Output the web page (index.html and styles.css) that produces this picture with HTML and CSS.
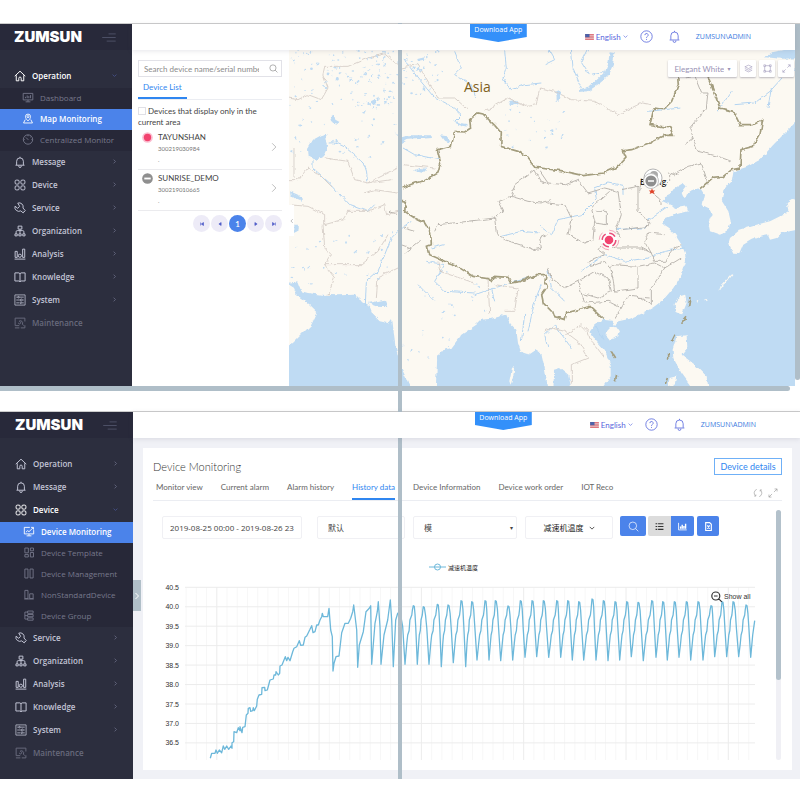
FILE: index.html
```
<!DOCTYPE html>
<html lang="en">
<head>
<meta charset="utf-8">
<meta name="viewport" content="width=device-width, initial-scale=1">
<title>ZUMSUN device monitoring</title>
<link rel="stylesheet" href="styles.css">
</head>
<body>
<svg class="sprite" aria-hidden="true">
  <symbol id="i-home" viewBox="0 0 16 16"><path d="M1 8.2 8 1.6l7 6.6M3 7v7.4h3.4V11a1.6 1.6 0 0 1 3.2 0v3.4H13V7"/></symbol>
  <symbol id="i-board" viewBox="0 0 16 16"><path d="M1 2h14v9.5H1zM8 11.500V14M4.500 14.300h7M4.300 9V7M6.800 9V5M9.200 9V6M11.700 9V4.500"/></symbol>
  <symbol id="i-map" viewBox="0 0 16 16"><path d="M8 11.500C5.500 9 4.300 7.300 4.300 5.300a3.700 3.700 0 0 1 7.400 0c0 2-1.200 3.700-3.700 6.200zM4 9.500 1.500 14.500h13L12 9.500"/><circle cx="8" cy="5.300" r="1.500"/></symbol>
  <symbol id="i-gauge" viewBox="0 0 16 16"><circle cx="8" cy="8" r="6.800"/><path d="M5 5l3.500 3.500M8 1.500v1.800M1.500 8h1.600M13 8h1.600M12.500 3.600l-1.100 1.100"/></symbol>
  <symbol id="i-bell" viewBox="0 0 16 16"><path d="M2 12.300h12M3.500 12V7a4.500 4.500 0 0 1 9 0v5M8 2.500V1M6.300 13v.6a1.700 1.700 0 0 0 3.400 0V13"/></symbol>
  <symbol id="i-grid" viewBox="0 0 16 16"><rect x="1.500" y="1.500" width="5.300" height="5.300" rx="1.500"/><rect x="9.200" y="1.500" width="5.300" height="5.300" rx="1.500"/><rect x="1.500" y="9.200" width="5.300" height="5.300" rx="1.500"/><rect x="9.200" y="9.200" width="5.300" height="5.300" rx="1.500"/></symbol>
  <symbol id="i-wrench" viewBox="0 0 16 16"><path d="M5 1.500A5.300 5.300 0 0 1 12 8l3 3.500-2.800 3L9 11.800A5.300 5.300 0 0 1 1.400 5.600L5 8.500l2.500-2.800zM12 11.800l.6.6"/></symbol>
  <symbol id="i-org" viewBox="0 0 16 16"><path d="M5.500 1.500h5v4h-5zM8 5.500v6M2.800 11.500V9q0-1.500 1.500-1.500h7.400q1.500 0 1.500 1.500v2.500M1.300 11.800h3v2.700h-3zM6.500 11.800h3v2.700h-3zM11.700 11.800h3v2.700h-3z"/></symbol>
  <symbol id="i-bars" viewBox="0 0 16 16"><path d="M.8 14.800h14.400M1.500 12.500v-8h2.800v8zM11.500 12.500v-11h2.800v11z"/><circle cx="7.800" cy="10.300" r="2.100"/></symbol>
  <symbol id="i-book" viewBox="0 0 16 16"><path d="M8 3.500V14M1.200 2.500H6.500L8 3.600 9.500 2.500h5.300v10.800H9.500L8 14.300 6.500 13.300H1.200z"/></symbol>
  <symbol id="i-system" viewBox="0 0 16 16"><g stroke-width="1"><path d="M1.200 1.200h13.600v13.600H1.200zM3 4.200h2M7 4.200h6M3 8h5M11.500 8H13M3 11.800h4M10.500 11.800H13"/><circle cx="6" cy="4.200" r="1"/><circle cx="9.800" cy="8" r="1.300"/><circle cx="9" cy="11.800" r="1"/></g></symbol>
  <symbol id="i-maint" viewBox="0 0 16 16"><path d="M14.500 6V1.500h-13v10H7M1.200 14.500h6M9 14.500h5.500V11"/><path d="M7 5.500a3 3 0 0 1 4.200 4L13 11.500M7 5.500l2.200 2L7.500 9.500 5.500 8"/></symbol>
  <symbol id="i-monitor" viewBox="0 0 16 16"><path d="M14.800 6v5.500H1.200V2h8M8 11.500V14M4.500 14.300h7M3.500 9 6 6.800l2 1.500L14 2.500M11 2h3.500v3.300"/></symbol>
  <symbol id="i-template" viewBox="0 0 16 16"><path d="M2 1.500h5v7H2zM10 1.500h4.500v4H10zM2 11h5v3.500H2zM10 8h4.500v6.500H10z"/></symbol>
  <symbol id="i-columns" viewBox="0 0 16 16"><path d="M2 1.500h4.500v13H2zM9.500 1.500H14v13H9.500z"/></symbol>
  <symbol id="i-nonstd" viewBox="0 0 16 16"><path d="M2 2h4.500v12H2zM9 7h5v7H9zM1 14.500h14"/></symbol>
  <symbol id="i-group" viewBox="0 0 16 16"><path d="M6 1.500h8v3.300H6zM6 6.500h8v3.300H6zM6 11.500h8v3.300H6zM6 3H2v10.200h4M2 8.200h4"/></symbol>
  <symbol id="i-right" viewBox="0 0 8 8"><path d="M2.500 1 5.500 4l-3 3"/></symbol>
  <symbol id="i-down" viewBox="0 0 8 8"><path d="M1 2.500 4 5.500l3-3"/></symbol>
  <symbol id="i-search" viewBox="0 0 16 16"><circle cx="7" cy="7" r="5.500"/><path d="M11 11l4 4"/></symbol>
  <symbol id="i-menu" viewBox="0 0 16 10"><path d="M8 1h8M1 5h15M6 9h10"/></symbol>
  <symbol id="i-help" viewBox="0 0 16 16"><circle cx="8" cy="8" r="7"/><path d="M6 6.300a2 2 0 1 1 3 1.700q-1 .6-1 1.700M8 11v1.200"/></symbol>
  <symbol id="i-layers" viewBox="0 0 16 16"><path d="M8 2 14.500 5 8 8 1.500 5zM1.500 8 8 11l6.500-3M1.500 11 8 14l6.500-3"/></symbol>
  <symbol id="i-frame" viewBox="0 0 16 16"><path d="M1.500 1.500h3v3h-3zM11.500 1.500h3v3h-3zM1.500 11.500h3v3h-3zM11.500 11.500h3v3h-3zM4.500 3h7M4.500 13h7M3 4.500v7M13 4.500v7"/></symbol>
  <symbol id="i-expand" viewBox="0 0 16 16"><path d="M9.500 6.500l5-5M10.500 1.500h4v4M6.500 9.500l-5 5M1.500 10.500v4h4"/></symbol>
  <symbol id="i-refresh" viewBox="0 0 16 16"><path d="M6 2.200A6.200 6.200 0 0 0 4 12.700M2 13h2.500v-2.700M10 13.800A6.200 6.200 0 0 0 12 3.300M14 3h-2.500v2.700"/></symbol>
  <symbol id="i-flag" viewBox="0 0 16 11"><path fill="#e9cfd3" d="M0 0h16v11H0z"/><path fill="none" stroke="#dc6068" stroke-width="1.500" d="M0 1h16M0 4h16M0 7h16M0 10h16"/><path fill="#4d62a8" d="M0 0h8v6H0z"/></symbol>
</svg>

<main class="page">
  <section class="shot shot-map" aria-label="Map monitoring">
    <aside class="side">
      <div class="brand"><span class="logo">ZUMSUN</span><button class="plain menu" aria-label="Collapse menu"><svg><use href="#i-menu"/></svg></button></div>
      <nav>
        <ul>
          <li><a class="on" href="#"><svg><use href="#i-home"/></svg>Operation<svg class="arr"><use href="#i-down"/></svg></a>
            <ul class="sub">
              <li><a href="#"><svg><use href="#i-board"/></svg>Dashboard</a></li>
              <li><a class="current" href="#"><svg><use href="#i-map"/></svg>Map Monitoring</a></li>
              <li><a href="#"><svg><use href="#i-gauge"/></svg>Centralized Monitor</a></li>
            </ul></li>
          <li><a href="#"><svg><use href="#i-bell"/></svg>Message<svg class="arr"><use href="#i-right"/></svg></a></li>
          <li><a href="#"><svg><use href="#i-grid"/></svg>Device<svg class="arr"><use href="#i-right"/></svg></a></li>
          <li><a href="#"><svg><use href="#i-wrench"/></svg>Service<svg class="arr"><use href="#i-right"/></svg></a></li>
          <li><a href="#"><svg><use href="#i-org"/></svg>Organization<svg class="arr"><use href="#i-right"/></svg></a></li>
          <li><a href="#"><svg><use href="#i-bars"/></svg>Analysis<svg class="arr"><use href="#i-right"/></svg></a></li>
          <li><a href="#"><svg><use href="#i-book"/></svg>Knowledge<svg class="arr"><use href="#i-right"/></svg></a></li>
          <li><a href="#"><svg><use href="#i-system"/></svg>System<svg class="arr"><use href="#i-right"/></svg></a></li>
          <li><a class="dim" href="#"><svg><use href="#i-maint"/></svg>Maintenance</a></li>
        </ul>
      </nav>
    </aside>
    <div class="work">
      <header class="top">
        <a class="app" href="#">Download App</a>
        <label class="lang"><svg class="flag"><use href="#i-flag"/></svg><select aria-label="Language"><option>English</option></select><svg class="tiny"><use href="#i-down"/></svg></label>
        <button class="plain" aria-label="Help"><svg class="ico"><use href="#i-help"/></svg></button>
        <button class="plain" aria-label="Alerts"><svg class="ico"><use href="#i-bell"/></svg></button>
        <a class="user" href="#">ZUMSUN\ADMIN</a>
      </header>
      <div class="split">
        <div class="panel">
          <div class="search"><input type="text" aria-label="Search devices" placeholder="Search device name/serial number"><button class="plain" aria-label="Search"><svg><use href="#i-search"/></svg></button></div>
          <div class="ptabs"><a href="#">Device List</a></div>
          <label class="only"><input type="checkbox">Devices that display only in the current area</label>
          <ul class="devices">
            <li><svg class="state" viewBox="0 0 12 12"><circle cx="6" cy="6" r="5.800" fill="#fbc0d2"/><circle cx="6" cy="6" r="4" fill="#f2436f"/></svg><div><b>TAYUNSHAN</b><small>300219030984</small><small>.</small></div><svg class="go"><use href="#i-right"/></svg></li>
            <li><svg class="state" viewBox="0 0 12 12"><circle cx="6" cy="6" r="5.800" fill="#8f8f8f"/><path d="M2.500 6h7" stroke="#fff" stroke-width="2"/></svg><div><b>SUNRISE_DEMO</b><small>300219010665</small><small>.</small></div><svg class="go"><use href="#i-right"/></svg></li>
          </ul>
          <div class="pager">
            <button aria-label="First page"><svg viewBox="0 0 8 8"><path d="M2 2v4M6 2v4L3 4z"/></svg></button>
            <button aria-label="Previous page"><svg viewBox="0 0 8 8"><path d="M5.500 2v4L2.500 4z"/></svg></button>
            <button class="now">1</button>
            <button aria-label="Next page"><svg viewBox="0 0 8 8"><path d="M2.500 2v4l3-2z"/></svg></button>
            <button aria-label="Last page"><svg viewBox="0 0 8 8"><path d="M6 2v4M2 2v4l3-2z"/></svg></button>
          </div>
        </div>
        <div class="map">
          <svg class="canvas" viewBox="289 50 506 336" preserveAspectRatio="xMidYMid slice" role="img" aria-label="Map of Asia">
            <defs><filter id="rough" x="-5%" y="-5%" width="110%" height="110%"><feTurbulence type="fractalNoise" baseFrequency="0.16" numOctaves="3" seed="4"/><feDisplacementMap in="SourceGraphic" scale="4" xChannelSelector="R" yChannelSelector="G"/></filter></defs>
            <path fill="#fcf9f2" d="M280 40h530v360H280z"/>
            <g filter="url(#rough)"><g transform="translate(288 48) scale(.33333)">
              <g class="sea">
                <path d="M0 705 28 700 40 730 60 735 100 740 150 742 200 740 215 755 240 770 250 795 275 820 300 825 312 810 322 890 335 950 350 980 372 1030H-10V900L15 885 45 855 70 830 88 792 60 765 25 740 15 715z"/>
                <path d="M443 1030 448 920 460 908 490 900 520 860 565 830 580 815 610 812 655 800 665 825 685 845 690 885 700 915 720 922 745 905 760 915 770 960 782 1030z"/>
                <path d="M796 1030 798 965 816 960 841 980 852 1030z"/>
                <path d="M944 812 971 815 981 835 991 820 1026 812 1066 795 1096 778 1126 755 1156 720 1181 680 1194 640 1191 615 1181 590 1161 560 1141 540 1126 530 1128 512 1156 502 1201 490 1196 475 1166 480 1141 468 1124 460 1131 445 1151 435 1161 420 1186 405 1196 415 1181 435 1186 447 1211 430 1238 422 1248 438 1241 470 1261 480 1271 500 1261 525 1266 550 1296 560 1321 545 1328 520 1321 490 1301 458 1306 430 1331 400 1336 370 1376 357 1416 335 1456 290 1496 250 1540 205V1030H936L968 985V950L951 910 921 875 906 850 921 830z"/>
                <path d="M1430 28 1456 12 1540 -5V30L1480 32z"/>
                <path d="M60 300 75 275 100 262 122 255 112 275 120 298 108 325 85 335 62 328z"/>
                <path d="M342 268 360 262 430 262 432 270 400 272 355 276 342 285zM320 250 330 268 340 275 330 275zM456 262 478 265 484 285 468 278zM378 368 395 360 418 362 405 375zM500 218 515 225 540 228 530 238 508 230zM245 160 262 152 268 160 255 170zM128 205 138 200 142 215 155 222 145 230 132 222zM6 430 40 445 42 458 8 445zM16 530 30 530 28 550 16 556zM238 765 290 755 298 778 268 776zM660 160 685 155 690 165 668 172zM388 30 410 25 412 35 395 38zM805 130 818 125 812 158 806 158z"/>
                <path d="M965 10 980 12 975 50 960 85 930 110 900 130 872 132 880 122 905 115 930 92 952 70 962 40z"/>
              </g>
              <g class="land">
                <path d="M1530 445 1496 465 1501 490 1476 505 1446 520 1406 530 1356 545 1326 570 1321 587 1336 617 1354 618 1366 590 1391 575 1416 566 1440 562 1446 575 1466 570 1480 555 1530 545z"/>
                <path d="M1191 740 1196 765 1182 800 1163 792 1160 768 1175 745zM971 838 996 845 991 865 966 875 952 858z"/>
                <path d="M1166 865 1196 862 1198 900 1181 920 1221 950 1256 985 1263 1030H1220L1180 975 1156 930 1154 905zM1145 990 1165 985 1160 1010 1140 1015z"/>
                <path d="M672 960 680 955 676 985 668 1010 664 1000zM1298 715 1330 680 1336 678 1310 710 1290 725zM1248 755 1258 752 1254 760zM1222 760 1235 755 1230 762z"/>
              </g>
              <g class="river">
                <path d="M122 285Q150 280 180 305T225 345T236 400M75 335V360L130 410 185 470 240 490 260 470M232 770 235 700 270 670 290 620 310 570 340 540 370 520M345 30 390 90 440 150 500 180 520 200 500 220M500 10 520 60 500 80 550 110 565 150M650 10 655 60 645 90 670 125 710 110 760 105M850 0 855 60 880 120M900 0 880 40 905 80 950 70M780 0 800 35 770 50"/>
                <path d="M345 300 380 320 455 335M640 565 700 550 755 555M415 640 470 650 440 700 470 730 560 735M390 710 440 760M560 740 650 710 720 690M610 720 620 760M720 850 740 760 760 710M700 880 710 800M470 590 430 600"/>
                <path d="M756 535 790 560 810 515 880 500 925 455 920 420 960 405 1005 415 1005 440M985 545 1060 540 1075 535M1080 515 1140 475M780 665 790 720 830 760M880 670 950 620 1010 640 1080 630 1130 610 1190 600M920 830 945 875M1080 190 1180 180M1290 190 1330 130M1340 170 1400 165 1446 130 1500 70 1530 60M1440 180 1450 120M780 900 770 860 800 830 850 900"/>
              </g>
              <g class="thin">
                <path d="M0 150 30 155 60 140 100 155 120 120 105 80 110 55 180 55 240 30 290 18 340 60M340 60 390 50 450 150 500 150 540 185M590 190 660 150 720 175 745 170 755 120 800 130 850 155 920 160 990 200 1060 165 1090 170M0 395 30 395 60 360 100 385 135 420M18 300V390M110 330 180 340 200 395 240 405 330 360M225 435 260 425 330 435M240 405 310 395M0 470 60 475 110 500 110 530 165 515 180 490 240 490 290 470 295 500 330 490M105 530 110 600 130 620 110 650 220 650 270 610 300 560M110 650 140 690 120 740M265 750 270 690 330 660M345 350 440 360M450 640 455 670 560 705M600 690 605 800M620 710 690 720 680 790 650 790M770 850 790 840 830 850 870 880 900 930 850 950 850 1010M835 860 880 830 900 850 905 870 950 930"/>
              </g>
              <g class="prov">
                <path d="M440 550 450 530 540 520 620 510 645 490 630 460 670 445 680 410 740 365 760 400 775 405M670 445 720 460 756 465 790 455M620 510 625 555 650 575 740 605 760 600 755 570 775 560M345 540 380 550M342 590 370 600 395 580M345 620 370 600M300 490 330 500"/>
                <path d="M756 370 780 405 830 410 870 395 900 435 950 420 990 430M775 465 830 470 850 510 840 560 890 585 915 575 920 520 910 480 930 460 965 430M925 490 955 490 955 530 920 525M990 430 1000 500 985 545 1000 570M1000 425 1050 415 1050 490 1085 520 1080 535 1000 545M1060 390 1055 430M1090 430 1115 450 1120 470M1140 375 1160 380 1200 355 1240 345 1255 390 1260 410M1190 90 1220 85 1240 135 1260 135 1255 180 1205 240 1215 270M1190 290 1215 270 1230 310 1290 325 1330 340M1145 375 1145 400 1130 415M985 600 950 580 930 605 950 620 900 640 910 655 950 640 965 660M985 600 1060 600 1090 615 1070 580 1080 555 1130 560M1090 615 1100 640 1130 640 1160 600 1180 590M965 660 975 650 1050 655 1050 720 980 730 975 690zM1050 655 1100 645 1130 660 1090 720 1090 770 1050 745M1130 660 1180 630M870 700 920 670 960 690 970 730 930 750 880 735zM780 660 790 690 830 720 870 700M880 735 890 765 960 760 1000 780 980 810M1000 780 1020 745 1085 750"/>
              </g>
              <g class="nation">
                <path d="M342 420 380 405 410 398 450 375 458 345 448 305 490 295 500 250 530 252 548 240 545 215 570 195 585 198 620 232 640 255 638 295 690 310 715 325 740 358 816 368 886 383 946 375 991 355 1014 330 1006 308 1031 305 1086 285 1131 262 1156 262 1146 240 1086 230 1098 180 1126 185 1151 160 1171 110 1168 70M1250 60 1261 88 1296 180 1336 190 1356 230 1396 230 1424 215 1416 260 1396 295 1359 305 1356 360 1331 365 1306 385 1276 388 1236 422"/>
                <path d="M330 455 355 460 350 490 380 510 410 525 428 555 430 590 418 595 425 620 470 640 500 650 555 685 605 692 610 700 620 685 660 688 670 705 700 700 745 680 774 680 771 700 778 715 761 740 766 765 791 790 796 805 831 815 836 795 906 775 944 812"/>
                <path d="M1206 750 1202 775M1194 808 1180 825M1160 860 1150 880M1142 915V935M1138 990 1132 1008M968 910 980 930M986 982 982 1000"/>
              </g>
            </g><g id="lakes" class="sea"></g></g>
            <text class="asia" x="464" y="92">Asia</text>
            <text class="city" x="640" y="185">Beijing</text>
            <g fill="none"><circle cx="653" cy="178" r="9" fill="#fff" stroke="#b5b5b5"/><circle cx="654" cy="175" r="4" fill="#aaa"/><circle cx="651" cy="181" r="7.500" fill="#fff" stroke="#c4c4c4"/><circle cx="651" cy="181" r="5.600" fill="#8f8f8f"/><path d="M648 181h6" stroke="#fff" stroke-width="1.500"/></g>
            <path d="m652 188.500 1 2h2.200l-1.600 1.400.8 2.200-2.400-1.200-2.400 1.200.8-2.200-1.600-1.400h2.200z" fill="#e0442a"/>
            <g fill="none" stroke="#e8507a"><circle cx="609" cy="240" r="8" fill="#fff" stroke="none"/><circle cx="609" cy="240" r="6.800" stroke-width="1.600" stroke-dasharray="7 3.680"/><circle cx="609" cy="240" r="9.800" stroke="#f3a5bb" stroke-dasharray="8 7.390"/><circle cx="609" cy="240" r="4.300" fill="#f2436f" stroke="none"/></g>
          </svg>
          <button class="fold" aria-label="Hide list"><svg viewBox="0 0 8 8"><path d="M6 1 3 4l3 3"/></svg></button>
          <div class="tools">
            <label class="style"><select aria-label="Map style"><option>Elegant White</option></select><span>▾</span></label>
            <button aria-label="Layers"><svg><use href="#i-layers"/></svg></button>
            <button aria-label="Select area"><svg><use href="#i-frame"/></svg></button>
            <button aria-label="Full screen"><svg><use href="#i-expand"/></svg></button>
          </div>
        </div>
      </div>
    </div>
    <div class="vbar"></div>
  </section>
  <div class="hbar"></div>

  <section class="shot shot-history" aria-label="Device monitoring">
    <aside class="side">
      <div class="brand"><span class="logo">ZUMSUN</span><button class="plain menu" aria-label="Collapse menu"><svg><use href="#i-menu"/></svg></button></div>
      <nav>
        <ul>
          <li><a href="#"><svg><use href="#i-home"/></svg>Operation<svg class="arr"><use href="#i-right"/></svg></a></li>
          <li><a href="#"><svg><use href="#i-bell"/></svg>Message<svg class="arr"><use href="#i-right"/></svg></a></li>
          <li><a class="on" href="#"><svg><use href="#i-grid"/></svg>Device<svg class="arr"><use href="#i-down"/></svg></a>
            <ul class="sub">
              <li><a class="current" href="#"><svg><use href="#i-monitor"/></svg>Device Monitoring</a></li>
              <li><a href="#"><svg><use href="#i-template"/></svg>Device Template</a></li>
              <li><a href="#"><svg><use href="#i-columns"/></svg>Device Management</a></li>
              <li><a href="#"><svg><use href="#i-nonstd"/></svg>NonStandardDevice</a></li>
              <li><a href="#"><svg><use href="#i-group"/></svg>Device Group</a></li>
            </ul></li>
          <li><a href="#"><svg><use href="#i-wrench"/></svg>Service<svg class="arr"><use href="#i-right"/></svg></a></li>
          <li><a href="#"><svg><use href="#i-org"/></svg>Organization<svg class="arr"><use href="#i-right"/></svg></a></li>
          <li><a href="#"><svg><use href="#i-bars"/></svg>Analysis<svg class="arr"><use href="#i-right"/></svg></a></li>
          <li><a href="#"><svg><use href="#i-book"/></svg>Knowledge<svg class="arr"><use href="#i-right"/></svg></a></li>
          <li><a href="#"><svg><use href="#i-system"/></svg>System<svg class="arr"><use href="#i-right"/></svg></a></li>
          <li><a class="dim" href="#"><svg><use href="#i-maint"/></svg>Maintenance</a></li>
        </ul>
      </nav>
    </aside>
    <div class="work">
      <header class="top">
        <a class="app" href="#">Download App</a>
        <label class="lang"><svg class="flag"><use href="#i-flag"/></svg><select aria-label="Language"><option>English</option></select><svg class="tiny"><use href="#i-down"/></svg></label>
        <button class="plain" aria-label="Help"><svg class="ico"><use href="#i-help"/></svg></button>
        <button class="plain" aria-label="Alerts"><svg class="ico"><use href="#i-bell"/></svg></button>
        <a class="user" href="#">ZUMSUN\ADMIN</a>
      </header>
      <button class="drawer" aria-label="Open device tree"><svg><use href="#i-right"/></svg></button>
      <div class="card">
        <div class="title"><h1>Device Monitoring</h1><button>Device details</button></div>
        <div class="tabs">
          <a href="#">Monitor view</a><a href="#">Current alarm</a><a href="#">Alarm history</a><a class="current" href="#">History data</a><a href="#">Device Information</a><a href="#">Device work order</a><a href="#">IOT Reco</a>
          <span class="acts"><button class="plain" aria-label="Refresh"><svg><use href="#i-refresh"/></svg></button><button class="plain" aria-label="Full screen"><svg><use href="#i-expand"/></svg></button></span>
        </div>
        <div class="body">
          <div class="content">
            <div class="filters">
              <input class="range" type="text" aria-label="Time range" value="2019-08-25 00:00 - 2019-08-26 23:59">
              <select class="mode" aria-label="Group"><option>默认</option></select>
              <label class="kind"><select aria-label="Type"><option>模</option></select><span>▾</span></label>
              <button class="metric">减速机温度<svg><use href="#i-down"/></svg></button>
              <div class="btns">
                <button class="go-search" aria-label="Search"><svg><use href="#i-search"/></svg></button>
                <button class="as-list" aria-label="List"><svg viewBox="0 0 16 16"><path d="M1 3h3M1 8h3M1 13h3M5.500 3H15M5.500 8H15M5.500 13H15"/></svg></button>
                <button class="as-chart" aria-label="Chart"><svg viewBox="0 0 16 16"><path d="M1 1.500V14h14.500" stroke-width="1.500"/><path d="M4.500 12V8M7.500 12V5M10.500 12V7M13.500 12V3" stroke-width="2.500"/></svg></button>
                <button class="as-file" aria-label="Export"><svg viewBox="0 0 16 16"><path d="M3 1h7l3 3v11H3zM6 6l4 6M10 6l-4 6" stroke-width="2"/></svg></button>
              </div>
            </div>
            <div class="legend"><svg viewBox="0 0 17 8"><path d="M0 4h17"/><circle cx="8.500" cy="4" r="3"/></svg>减速机温度</div>
            <svg class="chart" id="chart" viewBox="153 578 615 182" role="img" aria-label="减速机温度"></svg>
          </div>
          <div class="track"><div class="thumb"></div></div>
        </div>
      </div>
    </div>
  </section>
  <div class="divider"></div>
</main>
<script src="script.js"></script>
</body>
</html>
```
FILE: styles.css
```
* { box-sizing: border-box; }
body { margin: 0; background: #fff; font-family: "Open Sans", "Noto Sans CJK SC", sans-serif; font-size: 8px; color: #444; }
ul { margin: 0; padding: 0; list-style: none; }
a { color: inherit; text-decoration: none; }
svg { fill: none; stroke: currentColor; flex: none; }
button, input, select { font: inherit; color: inherit; margin: 0; padding: 0; border: 0; background: none; appearance: none; outline: none; }
button { display: flex; align-items: center; justify-content: center; }
.sprite { display: none; }

.page { position: relative; padding-top: 23px; }
.shot { display: flex; border-top: 1px solid #ccc; }
.divider { position: absolute; top: 23px; bottom: 0; left: 50%; width: 4px; margin-left: -2px; background: #afbec8; }
.hbar { height: 5px; margin: 0 10px 20px 0; background: #afbec8; border-radius: 0 3px 3px 0; }
.vbar { width: 5px; margin-bottom: 6px; background: #afbec8; border-radius: 0 0 3px 3px; }

.side { flex: none; width: 132px; padding-bottom: 51px; background: #2c2e3e; color: #c3c5d6; }
.shot-history .side { width: 133px; padding-bottom: 13px; }
.shot-history .brand, .shot-history .side a { padding-left: 15px; }
.shot-history .side .sub a { padding-left: 23px; }
.brand { display: flex; align-items: center; justify-content: space-between; height: 26px; padding: 0 16px 0 14px; background: #28293a; margin-bottom: 15px; }
.logo { font-family: Inter, sans-serif; font-weight: 900; font-size: 15px; line-height: 20px; color: #fff; }
.menu { color: #50536a; }
.menu svg { width: 15px; height: 9px; }
.side a { display: flex; align-items: center; height: 23px; padding: 0 15px 2px 14px; gap: 6px; font-weight: 600; }
.side a svg { width: 12px; height: 12px; stroke-width: 1.3; }
.side a .arr { width: 5px; height: 5px; margin-left: auto; color: #6c6f86; }
.side .on { color: #fff; }
.side .on .arr { color: #4a5590; }
.side .dim { color: #686a7c; }
.side .sub { background: #272838; }
.side .sub a { height: 21px; padding-left: 22px; font-weight: 400; color: #77798c; }
.side .sub .current { background: #4b83ea; color: #fff; font-weight: 600; }
.side .sub a svg { width: 12px; height: 11px; }

.work { flex: 1; min-width: 0; display: flex; flex-direction: column; position: relative; font-family: Lato, "Noto Sans CJK SC", sans-serif; }
.top { position: relative; z-index: 1; display: flex; align-items: center; justify-content: flex-end; height: 26px; padding: 0 44px 1px 0; background: #fff; box-shadow: 0 1px 5px rgba(80, 80, 110, .15); color: #5867dd; }
.app { align-self: flex-start; width: 57px; height: 18px; margin-right: 58px; background: #3390fa; color: #fff; font-family: "Open Sans", sans-serif; font-size: 7px; line-height: 11px; text-align: center; clip-path: polygon(0 0, 100% 0, 100% 72%, 50% 100%, 0 72%); }
.lang { display: flex; align-items: center; gap: 2px; margin-right: 12px; }
.flag { width: 9px; height: 6px; stroke: none; }
.tiny { width: 5px; height: 5px; }
.plain { display: flex; }
.ico { width: 13px; height: 13px; margin-right: 15px; }
.user { color: #3a7be0; font-family: "Open Sans", sans-serif; font-size: 7px; }

.split { flex: 1; display: flex; min-height: 0; }
.panel { flex: none; width: 157px; padding: 10px 7px 0 6px; background: #fff; }
.search { display: flex; align-items: center; height: 17px; padding: 0 3px 0 5px; border: 1px solid #e2e2e8; }
.search input { flex: 1; min-width: 0; margin-right: 10px; }
.search input::placeholder { color: #8b8b8b; opacity: 1; }
.search svg { width: 9px; height: 9px; color: #777; }
.ptabs { display: flex; border-bottom: 1px solid #ebedf2; }
.ptabs a { padding: 0 5px; line-height: 20px; border-bottom: 2px solid #2f86f0; color: #2f86f0; }
.only { display: block; margin: 6px 0 1px; line-height: 11px; }
.only input { width: 8px; height: 8px; margin-right: 2px; border: 1px solid #e0e0e6; vertical-align: -1px; }
.devices li { display: flex; height: 41px; padding: 3px 3px 0 4px; gap: 5px; border-bottom: 1px solid #ebebee; }
.state { width: 11px; height: 11px; stroke: none; }
.devices div { flex: 1; }
.devices b { display: block; font-weight: 400; line-height: 11px; }
.devices small { display: block; font-size: 6px; line-height: 11px; color: #777; }
.go { width: 10px; height: 10px; margin-top: 10px; color: #aaa; stroke-width: .6; }
.pager { display: flex; justify-content: flex-end; gap: 1px; margin-top: 4px; }
.pager button { width: 17px; height: 17px; border-radius: 50%; background: #edebf7; color: #4d5bc8; }
.pager svg { width: 6px; height: 6px; fill: currentColor; stroke-width: .8; }
.pager .now { background: #4b83ea; color: #fff; font-weight: 600; }

.map { position: relative; flex: 1; min-width: 0; overflow: hidden; background: #fcf9f2; }
.canvas { position: absolute; inset: 0; width: 100%; height: 100%; stroke: none; font-family: "Open Sans", sans-serif; }
.sea { fill: #bfdbf3; }
.land { fill: #fcf9f2; }
.river { fill: none; stroke: #b3d4f1; stroke-width: 3; }
.thin { fill: none; stroke: #d3cac4; stroke-width: 2.5; }
.prov { fill: none; stroke: #aeaaa4; stroke-width: 2.5; }
.nation { fill: none; stroke: #a39d7e; stroke-width: 5; }
.asia { fill: #7d5e1c; font-size: 14px; }
.city { fill: #222; font-size: 8px; font-weight: 600; }
.fold { position: absolute; left: 0; top: 155px; width: 5px; height: 31px; background: #fff; color: #999; }
.fold svg { width: 5px; height: 8px; }
.tools { position: absolute; top: 10px; right: 1px; display: flex; gap: 3px; color: #9a93b5; }
.tools > * { display: flex; align-items: center; justify-content: center; width: 16px; height: 17px; background: #fff; border-radius: 1px; box-shadow: 0 1px 2px rgba(60, 60, 90, .35); }
.tools svg { width: 9px; height: 9px; }
.tools .style { width: 69px; gap: 3px; }
.style span, .kind span { font-family: "DejaVu Sans", sans-serif; font-size: 6px; }

.shot-history .work { background: #f0f1f6; }
.drawer { position: absolute; left: 0; top: 168px; width: 8px; height: 31px; background: #b0bfc8; color: #fff; }
.drawer svg { width: 8px; height: 8px; }
.card { flex: 1; display: flex; flex-direction: column; margin: 10px 8px 9px 10px; padding: 10px; background: #fff; }
.title { display: flex; justify-content: space-between; align-items: center; }
.title h1 { margin: 0; font-size: 11px; line-height: 17px; font-weight: 300; color: #333; }
.title button { width: 68px; height: 17px; border: 1px solid #6fb0f7; color: #2f86f0; font-size: 9px; }
.tabs { display: flex; gap: 18px; padding-left: 3px; border-bottom: 1px solid #ebedf2; color: #666; }
.tabs a { padding-top: 1px; line-height: 22px; border-bottom: 2px solid transparent; white-space: nowrap; }
.tabs .current { color: #2f86f0; border-color: #2f86f0; }
.acts { display: flex; align-items: flex-end; gap: 5px; margin: 0 4px 2px auto; color: #999; }
.acts svg { width: 10px; height: 10px; }
.body { flex: 1; display: flex; }
.content { flex: 1; min-width: 0; padding: 15px 8px 0 0; }
.filters { display: flex; align-items: flex-start; padding-left: 9px; }
.range, .mode, .kind, .metric { height: 23px; border: 1px solid #f0f0f4; border-radius: 2px; }
.range { width: 140px; padding: 0 7px; margin-right: 15px; font-family: "Open Sans", sans-serif; }
.mode { width: 88px; padding: 0 10px; margin-right: 8px; }
.kind { display: flex; align-items: center; width: 104px; padding: 0 3px 0 10px; margin-right: 8px; }
.kind select { flex: 1; }
.metric { width: 88px; gap: 5px; margin-right: 7px; color: #222; }
.metric svg { width: 6px; height: 6px; }
.btns { display: flex; }
.btns button { height: 20px; width: 23px; background: #4b83ea; color: #fff; }
.btns svg { width: 9px; height: 9px; stroke-width: 2; }
.btns .go-search { width: 26px; margin-right: 2px; border-radius: 2px; }
.btns .go-search svg { width: 11px; height: 11px; stroke-width: 1; }
.btns .as-list { background: #dcdcdc; color: #333; border-radius: 2px 0 0 2px; }
.btns .as-chart { border-radius: 0 2px 2px 0; }
.btns .as-file { width: 22px; margin-left: 3px; border-radius: 2px; }
.legend { display: flex; align-items: center; justify-content: center; gap: 2px; height: 10px; margin: 23px 14px 0 0; font-size: 6px; color: #222; }
.legend svg { width: 17px; height: 8px; stroke: #6db8da; }
.chart { display: block; width: 100%; stroke: none; margin-top: 6px; }
.chart text { font-family: "Liberation Sans", sans-serif; font-size: 7px; fill: #333; }
.grid { stroke: #ececec; }
.grid-minor { stroke: #f7f7f7; }
.series { stroke: #6db8da; stroke-width: 1.3; stroke-linejoin: round; }
.zoom { stroke: #333; stroke-width: 1.2; }
.track { width: 5px; margin: 9px 1px 0 0; background: #f0f0f5; border-radius: 3px; }
.thumb { height: 68%; background: #b3c1cb; border-radius: 3px; }
```
FILE: script.js
```
const NS = "http://www.w3.org/2000/svg";
function add(parent, tag, attrs, text) {
  const el = document.createElementNS(NS, tag);
  for (const key in attrs) el.setAttribute(key, attrs[key]);
  if (text) el.textContent = text;
  parent.appendChild(el);
}

// Small lakes scattered over the northern and western plains.
let seed = 7;
function rnd() { seed = (seed * 16807) % 2147483647; return seed / 2147483647; }
const lakes = document.getElementById("lakes");
const areas = [[290, 50, 108, 60, 130], [290, 110, 108, 50, 30], [402, 50, 40, 45, 40], [505, 105, 60, 45, 28], [290, 240, 50, 45, 14], [345, 230, 50, 60, 14], [425, 270, 80, 50, 14], [400, 330, 50, 40, 12]];
for (const [x, y, w, h, n] of areas) {
  for (let i = 0; i < n; i++) {
    add(lakes, "ellipse", { cx: x + rnd() * w, cy: y + rnd() * h, rx: .4 + rnd(), ry: .4 + rnd() * .8 });
  }
}

// Temperature history.
const chart = document.getElementById("chart");
const left = 185, right = 755, top0 = 587.3, step = 19.45;
let minor = "", major = "";
for (let i = -3; i <= 52; i++) {
  const line = `M${216.8 + i * 10.23} ${top0}V760`;
  if (i % 10 === 0) major += line; else minor += line;
}
for (let i = 0; i < 9; i++) major += `M${left} ${top0 + i * step}H${right}`;
add(chart, "path", { class: "grid-minor", d: minor });
add(chart, "path", { class: "grid", d: major });
for (let i = 0; i < 9; i++) {
  add(chart, "text", { x: 179, y: top0 + i * step + 2.5, "text-anchor": "end" }, (40.5 - i * .5).toFixed(1));
}
const rise = [241,595,245,580,255,580,258,570,262,580,268,570,275,578,280,558,284,568,290,558,296,568,303,558,306,565,306,548,311,545,312,515,320,518,325,503,330,512,330,500,336,518,338,502,345,500,349,465,354,460,355,445,360,443,362,454,368,452,370,443,373,452,380,438,382,418,387,405,395,403,396,383,404,382,405,392,412,390,420,360,430,357,432,345,437,345,438,335,445,345,449,340,450,318,456,315,462,300,466,290,470,302,474,292,480,302,488,275,492,265,500,260,508,242,512,256,520,255,525,232,530,228,535,218,540,208,545,197,549,218,555,215,560,195,565,195,570,180,575,170,577,160,580,170,593,170,597,145,602,210,607,230,609,333,612,310,618,290,627,288,635,218,645,190,655,190,662,175,668,155,671,135,680,210,683,322,688,255,700,215,708,155,718,145,722,137,725,313,735,190,742,155,745,125,750,200,753,313,762,225,773,180,781,120,785,180,790,320,797,180,803,160,810,155,818,200];
const swings = [15,313,42,137,52,313,72,140,87,313,114,133,124,320,146,135,160,308,185,122,197,320,217,125,231,300,257,122,267,300,288,122,302,302,326,138,338,300,363,122,375,292,398,122,410,290,432,122,446,292,472,122,482,292,505,122,517,300,538,125,551,300,578,117,588,300,612,122,624,302,647,125,659,300,682,125,694,290,716,127,730,302,757,122,768,292,790,125,802,300,825,125,837,292,861,125,872,300,896,125,909,300,935,137,944,290,968,125,980,290,1001,125,1016,290,1040,135,1052,292];
const pts = [];
for (let i = 0; i < rise.length; i += 2) pts.push([130 + rise[i] / 3, 560 + rise[i + 1] / 3]);
const put = (x, y) => pts.push([400 + x / 3, 560 + y / 3]);
for (let i = 0; i < swings.length; i += 4) {
  const [tx, ty, px, py] = swings.slice(i, i + 4);
  put(tx, ty);
  if (px === undefined) break;
  const w = px - tx;
  put(tx + w * .2, 250); put(tx + w * .3, 225); put(tx + w * .45, 212);
  put(tx + w * .55, 180); put(tx + w * .75, 165); put(tx + w * .82, 150);
  put(px - 2, py); put(px + 1, py + 2);
  const f = swings[i + 4] - px;
  put(px + f * .3, py + 25); put(px + f * .55, 205);
}
put(1058, 225); put(1064, 182);
add(chart, "path", { class: "series", d: "M" + pts.map(p => p[0].toFixed(1) + " " + p[1].toFixed(1)).join("L") });
add(chart, "path", { class: "zoom", d: "M711.8 596a4 4 0 1 1 8 0a4 4 0 1 1-8 0M714 596h3.600M718.800 598.800l3 3" });
add(chart, "text", { x: 724, y: 598.500 }, "Show all");
```
